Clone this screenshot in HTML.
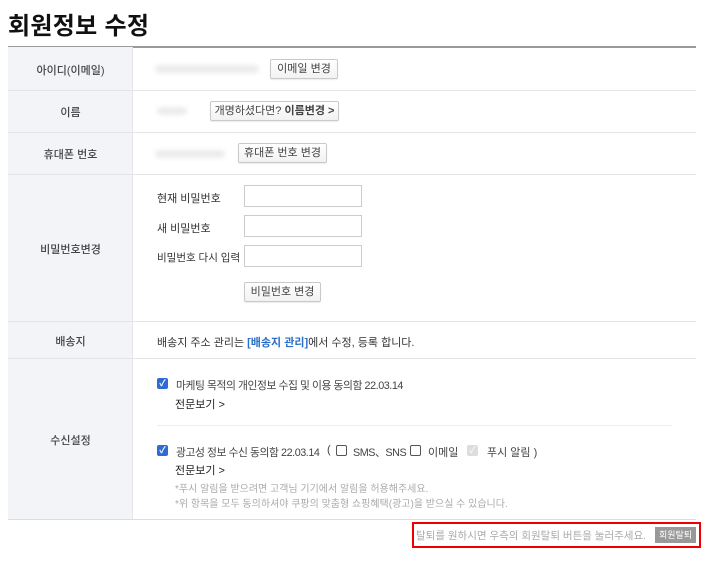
<!DOCTYPE html>
<html><head><meta charset="utf-8">
<style>
*{margin:0;padding:0;box-sizing:border-box}
body{width:712px;height:562px;background:#fff;font-family:"Liberation Sans","Noto Sans CJK KR",sans-serif;font-size:11px;color:#333;position:relative;overflow:hidden}
.a{position:absolute;white-space:nowrap}
h1{position:absolute;left:8px;top:6px;font-size:24px;font-weight:bold;color:#111;letter-spacing:0.3px}
.left{position:absolute;left:8px;top:47px;width:125px;height:472px;background:#f3f4f8;border-right:1px solid #e3e5ea}
.hl{position:absolute;left:8px;width:688px;height:1px;background:#e4e4e4}
.lab{position:absolute;left:8px;width:125px;text-align:center;font-size:11px;color:#444;font-weight:500}
.btn{position:absolute;height:20px;border:1px solid #c9c9c9;border-radius:2px;background:linear-gradient(#fff,#f2f2f2);font-size:11px;color:#444;text-align:center;line-height:18px;box-shadow:0 1px 1px rgba(0,0,0,.08)}
.blur{position:absolute;height:8px;background:#ececec;border-radius:4px;filter:blur(2px)}
.inp{position:absolute;left:244px;width:118px;height:22px;border:1px solid #ccc;background:#fff}
.cb{position:absolute;width:11px;height:11px;border-radius:2px;background:#2f6bd6;color:#fff;font-size:9px;line-height:11px;text-align:center;font-weight:bold}
.cbo{position:absolute;width:11px;height:11px;border:1px solid #555;border-radius:2px;background:#fff}
.gray{color:#aaa}
.t{letter-spacing:-0.45px;font-size:10.8px}
</style></head><body>
<h1>회원정보 수정</h1>
<div class="a" style="left:8px;top:46px;width:688px;height:2px;background:#999"></div>
<div class="left"></div>
<div class="hl" style="top:90px"></div>
<div class="hl" style="top:132px"></div>
<div class="hl" style="top:174px"></div>
<div class="hl" style="top:321px"></div>
<div class="hl" style="top:358px"></div>
<div class="hl" style="top:519px;background:#ddd"></div>

<div class="lab" style="top:62px">아이디(이메일)</div>
<div class="lab" style="top:104px">이름</div>
<div class="lab" style="top:146px">휴대폰 번호</div>
<div class="lab" style="top:241px">비밀번호변경</div>
<div class="lab" style="top:333px">배송지</div>
<div class="lab" style="top:432px">수신설정</div>

<div class="blur" style="left:155px;top:65px;width:104px"></div>
<div class="btn" style="left:270px;top:59px;width:68px">이메일 변경</div>
<div class="blur" style="left:157px;top:107px;width:30px"></div>
<div class="btn" style="left:210px;top:101px;width:129px">개명하셨다면? <b>이름변경 &gt;</b></div>
<div class="blur" style="left:155px;top:150px;width:70px"></div>
<div class="btn" style="left:238px;top:143px;width:89px">휴대폰 번호 변경</div>

<div class="a" style="left:157px;top:190px">현재 비밀번호</div>
<div class="inp" style="top:185px"></div>
<div class="a" style="left:157px;top:220px">새 비밀번호</div>
<div class="inp" style="top:215px"></div>
<div class="a" style="left:157px;top:250px;font-size:10.5px">비밀번호 다시 입력</div>
<div class="inp" style="top:245px"></div>
<div class="btn" style="left:244px;top:282px;width:77px">비밀번호 변경</div>

<div class="a" style="left:157px;top:334px">배송지 주소 관리는 <b style="color:#2a6fc9">[배송지 관리]</b>에서 수정, 등록 합니다.</div>

<div class="cb" style="left:157px;top:378px">✓</div>
<div class="a t" style="left:176px;top:377px;color:#444">마케팅 목적의 개인정보 수집 및 이용 동의함 22.03.14</div>
<div class="a" style="left:175px;top:396px;color:#222">전문보기 &gt;</div>
<div class="a" style="left:157px;top:425px;width:515px;height:1px;background:#eee"></div>
<div class="cb" style="left:157px;top:445px">✓</div>
<div class="a t" style="left:176px;top:444px;color:#444">광고성 정보 수신 동의함 22.03.14</div>
<div class="a" style="left:327px;top:444px;color:#444">(</div>
<div class="cbo" style="left:336px;top:445px"></div>
<div class="a t" style="left:353px;top:444px;color:#444">SMS、SNS</div>
<div class="cbo" style="left:410px;top:445px"></div>
<div class="a" style="left:428px;top:444px;color:#444">이메일</div>
<div class="a" style="left:467px;top:445px;width:11px;height:11px;background:#ddd;border-radius:2px;color:#fff;font-size:9px;line-height:11px;text-align:center">✓</div>
<div class="a" style="left:487px;top:444px;color:#444">푸시 알림 )</div>
<div class="a" style="left:175px;top:462px;color:#222">전문보기 &gt;</div>
<div class="a gray" style="left:175px;top:480px;font-size:10px">*푸시 알림을 받으려면 고객님 기기에서 알림을 허용해주세요.</div>
<div class="a gray" style="left:175px;top:495px;font-size:10px">*위 항목을 모두 동의하셔야 쿠팡의 맞춤형 쇼핑혜택(광고)을 받으실 수 있습니다.</div>

<div class="a" style="left:412px;top:522px;width:289px;height:26px;border:2px solid #e00"></div>
<div class="a gray" style="left:416px;top:528px;font-size:10.5px">탈퇴를 원하시면 우측의 회원탈퇴 버튼을 눌러주세요.</div>
<div class="a" style="left:655px;top:527px;width:41px;height:16px;background:#999;color:#fff;font-size:9px;line-height:16px;text-align:center">회원탈퇴</div>
</body></html>
